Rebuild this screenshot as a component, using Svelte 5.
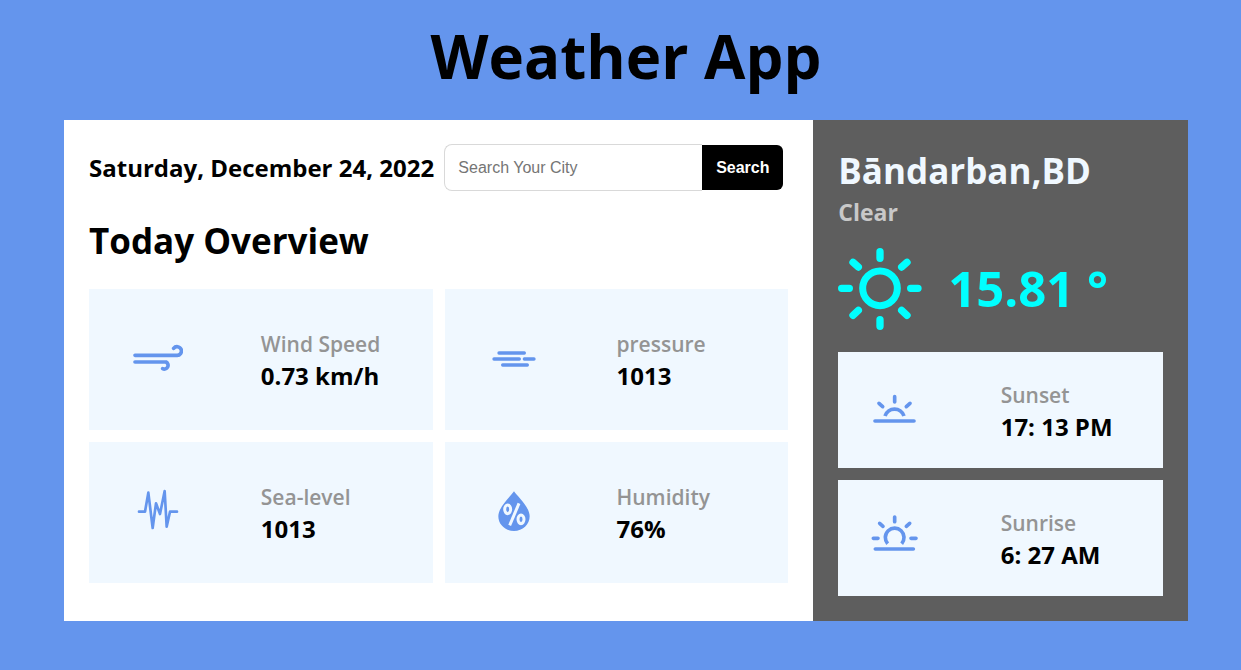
<script>
  let city = $state('');
  const overview = [
    { icon: 'wind', label: 'Wind Speed', value: '0.73 km/h' },
    { icon: 'pressure', label: 'pressure', value: '1013' },
    { icon: 'sea', label: 'Sea-level', value: '1013' },
    { icon: 'humidity', label: 'Humidity', value: '76%' }
  ];
  const sunTimes = [
    { icon: 'sunset', label: 'Sunset', value: '17: 13 PM' },
    { icon: 'sunrise', label: 'Sunrise', value: '6: 27 AM' }
  ];
  const viewBoxes = {
    wind: '39 15 150 150',
    pressure: '27 15 150 150',
    sea: '39 24 150 150',
    humidity: '27 24 150 150',
    sunset: '27 18 150 150',
    sunrise: '27 27 150 150'
  };
</script>

{#snippet glyph(name)}
  <svg class="glyph" viewBox={viewBoxes[name]} aria-hidden="true">
    {#if name === 'wind'}
      <path stroke-width="11" d="M45 76H170A13 13 0 1 0 161 55M45 96H138A11 11 0 1 1 128 116" />
    {:else if name === 'pressure'}
      <path stroke-width="10" d="M57 69H133M42 87H118M133 87H162M68 105H142" />
    {:else if name === 'sea'}
      <path stroke-width="8" d="M57 95H75L85 38L98 144L108 70L120 102L134 33L140 140L150 95H171" />
    {:else if name === 'humidity'}
      <path class="solid" d="M102 34C94 47 55 80 55 109C55 134 76 153 102 153S149 134 149 109C149 80 110 47 102 34Z" />
      <g class="cutout">
        <ellipse cx="83" cy="88" rx="9" ry="13" />
        <ellipse cx="123" cy="118" rx="9" ry="13" />
        <path d="M117 70L89 136" />
      </g>
    {:else if name === 'sunset'}
      <path stroke-width="11" d="M45 123H162M104 50V66M57 70L68 80M150 70L139 80" />
      <path stroke-width="11" stroke-linecap="butt" d="M75 108A30 30 0 0 1 132 108" />
    {:else}
      <path stroke-width="11" d="M46 132H160M104 36V50M59 55L69 64M149 55L139 64M40 100H54M153 100H168" />
      <path stroke-width="11" stroke-linecap="butt" d="M83 116A28 28 0 1 1 125 116" />
    {/if}
  </svg>
{/snippet}

{#snippet tile(item)}
  <div class="tile">
    <div class="tile-icon">{@render glyph(item.icon)}</div>
    <div class="tile-text">
      <p class="label">{item.label}</p>
      <p class="value">{item.value}</p>
    </div>
  </div>
{/snippet}

<main>
  <h1>Weather App</h1>
  <div class="board">
    <section class="overview">
      <div class="top">
        <p class="date">Saturday, December 24, 2022</p>
        <form onsubmit={(e) => e.preventDefault()}>
          <input type="text" aria-label="Search Your City" placeholder="Search Your City" bind:value={city} />
          <button type="submit">Search</button>
        </form>
      </div>
      <h2>Today Overview</h2>
      <div class="tiles">
        {#each overview as item}{@render tile(item)}{/each}
      </div>
    </section>
    <section class="current">
      <h2 class="city">Bāndarban,BD</h2>
      <p class="condition">Clear</p>
      <div class="temperature">
        <svg class="sun" viewBox="24 18 252 252" aria-hidden="true">
          <circle cx="150" cy="145" r="52" stroke-width="21" />
          <path stroke-width="22" d="M150 35V55M150 239V259M35 145H58M242 145H264M69 67L85 81M231 67L215 81M69 226L85 211M231 226L215 211" />
        </svg>
        <span>15.81 °</span>
      </div>
      <div class="times">
        {#each sunTimes as item}{@render tile(item)}{/each}
      </div>
    </section>
  </div>
</main>

<style>
  :global(body) {
    margin: 0;
    background: #6495ed;
  }
  main {
    padding: 14px 53px 48px 64px;
    font-family: 'Open Sans', 'Noto Sans', sans-serif;
    color: #000;
  }
  h1, h2, p {
    margin: 0;
  }
  h1 {
    font-size: 60px;
    line-height: 84px;
    font-weight: 700;
    text-align: center;
    margin-bottom: 22px;
  }
  .board {
    display: grid;
    grid-template-columns: 2fr 1fr;
  }
  .overview {
    background: #fff;
    padding: 24px 25px 38px;
  }
  .current {
    background: #5e5e5e;
    padding: 26px 25px 25px;
  }
  .top {
    display: flex;
    align-items: center;
    justify-content: space-between;
    padding-right: 5px;
    margin-bottom: 24px;
  }
  .date {
    font-size: 24px;
    line-height: 32px;
    font-weight: 700;
    white-space: nowrap;
  }
  form {
    display: flex;
    align-items: center;
    width: 339px;
  }
  input {
    flex: 1;
    min-width: 0;
    height: 47px;
    box-sizing: border-box;
    padding: 0 13px;
    border: 1px solid #d9d9d9;
    border-right: 0;
    border-radius: 8px 0 0 8px;
    font: 16px 'Liberation Sans', Arial, sans-serif;
    background: #fff;
  }
  input::placeholder {
    color: #757575;
  }
  button {
    height: 45px;
    width: 81px;
    padding: 0;
    border: 0;
    border-radius: 0 6px 6px 0;
    background: #000;
    color: #fff;
    font: bold 16px 'Liberation Sans', Arial, sans-serif;
  }
  h2 {
    font-size: 35px;
    line-height: 52px;
    font-weight: 700;
    white-space: nowrap;
  }
  .tiles {
    display: grid;
    grid-template-columns: 1fr 1fr;
    gap: 12px;
    margin-top: 22px;
  }
  .tile {
    display: grid;
    grid-template-columns: 1fr 1fr;
    align-items: center;
    background: #f0f8ff;
    padding: 39px 0 38px;
  }
  .tile-icon {
    display: flex;
    padding-left: 44px;
  }
  .times .tile {
    padding: 27px 0 25px;
  }
  .times .tile-icon {
    padding-left: 31px;
  }
  .label, .value {
    line-height: 32px;
    white-space: nowrap;
  }
  .label {
    font-size: 21px;
    font-weight: 600;
    color: #949494;
  }
  .value {
    font-size: 24px;
    font-weight: 700;
  }
  .glyph {
    width: 50px;
    height: 50px;
    fill: none;
    stroke: #6495ed;
    stroke-linecap: round;
    stroke-linejoin: round;
  }
  .glyph .solid {
    fill: #6495ed;
    stroke: none;
  }
  .glyph .cutout {
    stroke: #f0f8ff;
    stroke-width: 9;
    stroke-linecap: butt;
  }
  .city {
    color: #f0f8ff;
    line-height: 50px;
  }
  .condition {
    font-size: 23px;
    line-height: 32px;
    font-weight: 700;
    color: #c8c8c8;
  }
  .temperature {
    display: flex;
    align-items: center;
    gap: 26px;
    margin: 18px 0 22px;
    color: #00ffff;
    font-size: 49px;
    line-height: 68px;
    font-weight: 700;
    white-space: nowrap;
  }
  .sun {
    width: 84px;
    height: 84px;
    fill: none;
    stroke: currentColor;
    stroke-linecap: round;
  }
  .times {
    display: grid;
    gap: 12px;
  }
</style>
